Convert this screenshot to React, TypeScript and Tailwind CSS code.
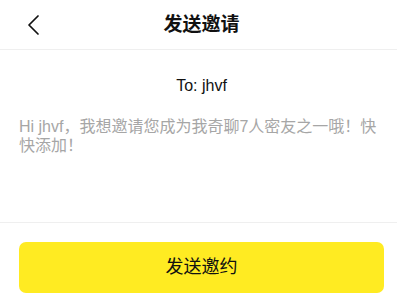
function App() {
  return (
    <div
      className="w-[397px] h-[301px] bg-white flex flex-col overflow-hidden"
      style={{ fontFamily: '"Liberation Sans", "Noto Sans CJK SC", sans-serif' }}
    >
      {/* header */}
      <div className="h-[50px] shrink-0 border-b border-[#efefef] pl-[19px] pr-[13px] grid grid-cols-[1fr_auto_1fr] items-center">
        <div className="pl-[8px] flex items-center">
          <svg width="13" height="20" viewBox="0 0 13 20" fill="none" className="text-[#111]">
            <path d="M11 1 L2 10 L11 19" stroke="currentColor" strokeWidth="1.7" strokeLinecap="round" strokeLinejoin="round" />
          </svg>
        </div>
        <h1 className="text-[19px] font-bold text-[#111] leading-none">发送邀请</h1>
        <div />
      </div>

      {/* content */}
      <div className="h-[173px] shrink-0 border-b border-[#efefef] pl-[19px] pr-[13px] pt-[27px]">
        <p className="text-center text-[16px] leading-[18px] text-[#111]">To: jhvf</p>
        <p className="mt-[22px] text-[16px] leading-[19px] text-[#a6a6a6]">
          Hi jhvf，我想邀请您成为我奇聊7人密友之一哦！快快添加！
        </p>
      </div>

      {/* button */}
      <div className="pl-[19px] pr-[13px] pt-[19px]">
        <button className="w-full h-[51px] rounded-[7px] bg-[#ffeb22] text-[18px] text-[#111]">
          发送邀约
        </button>
      </div>
    </div>
  );
}

export default App;
